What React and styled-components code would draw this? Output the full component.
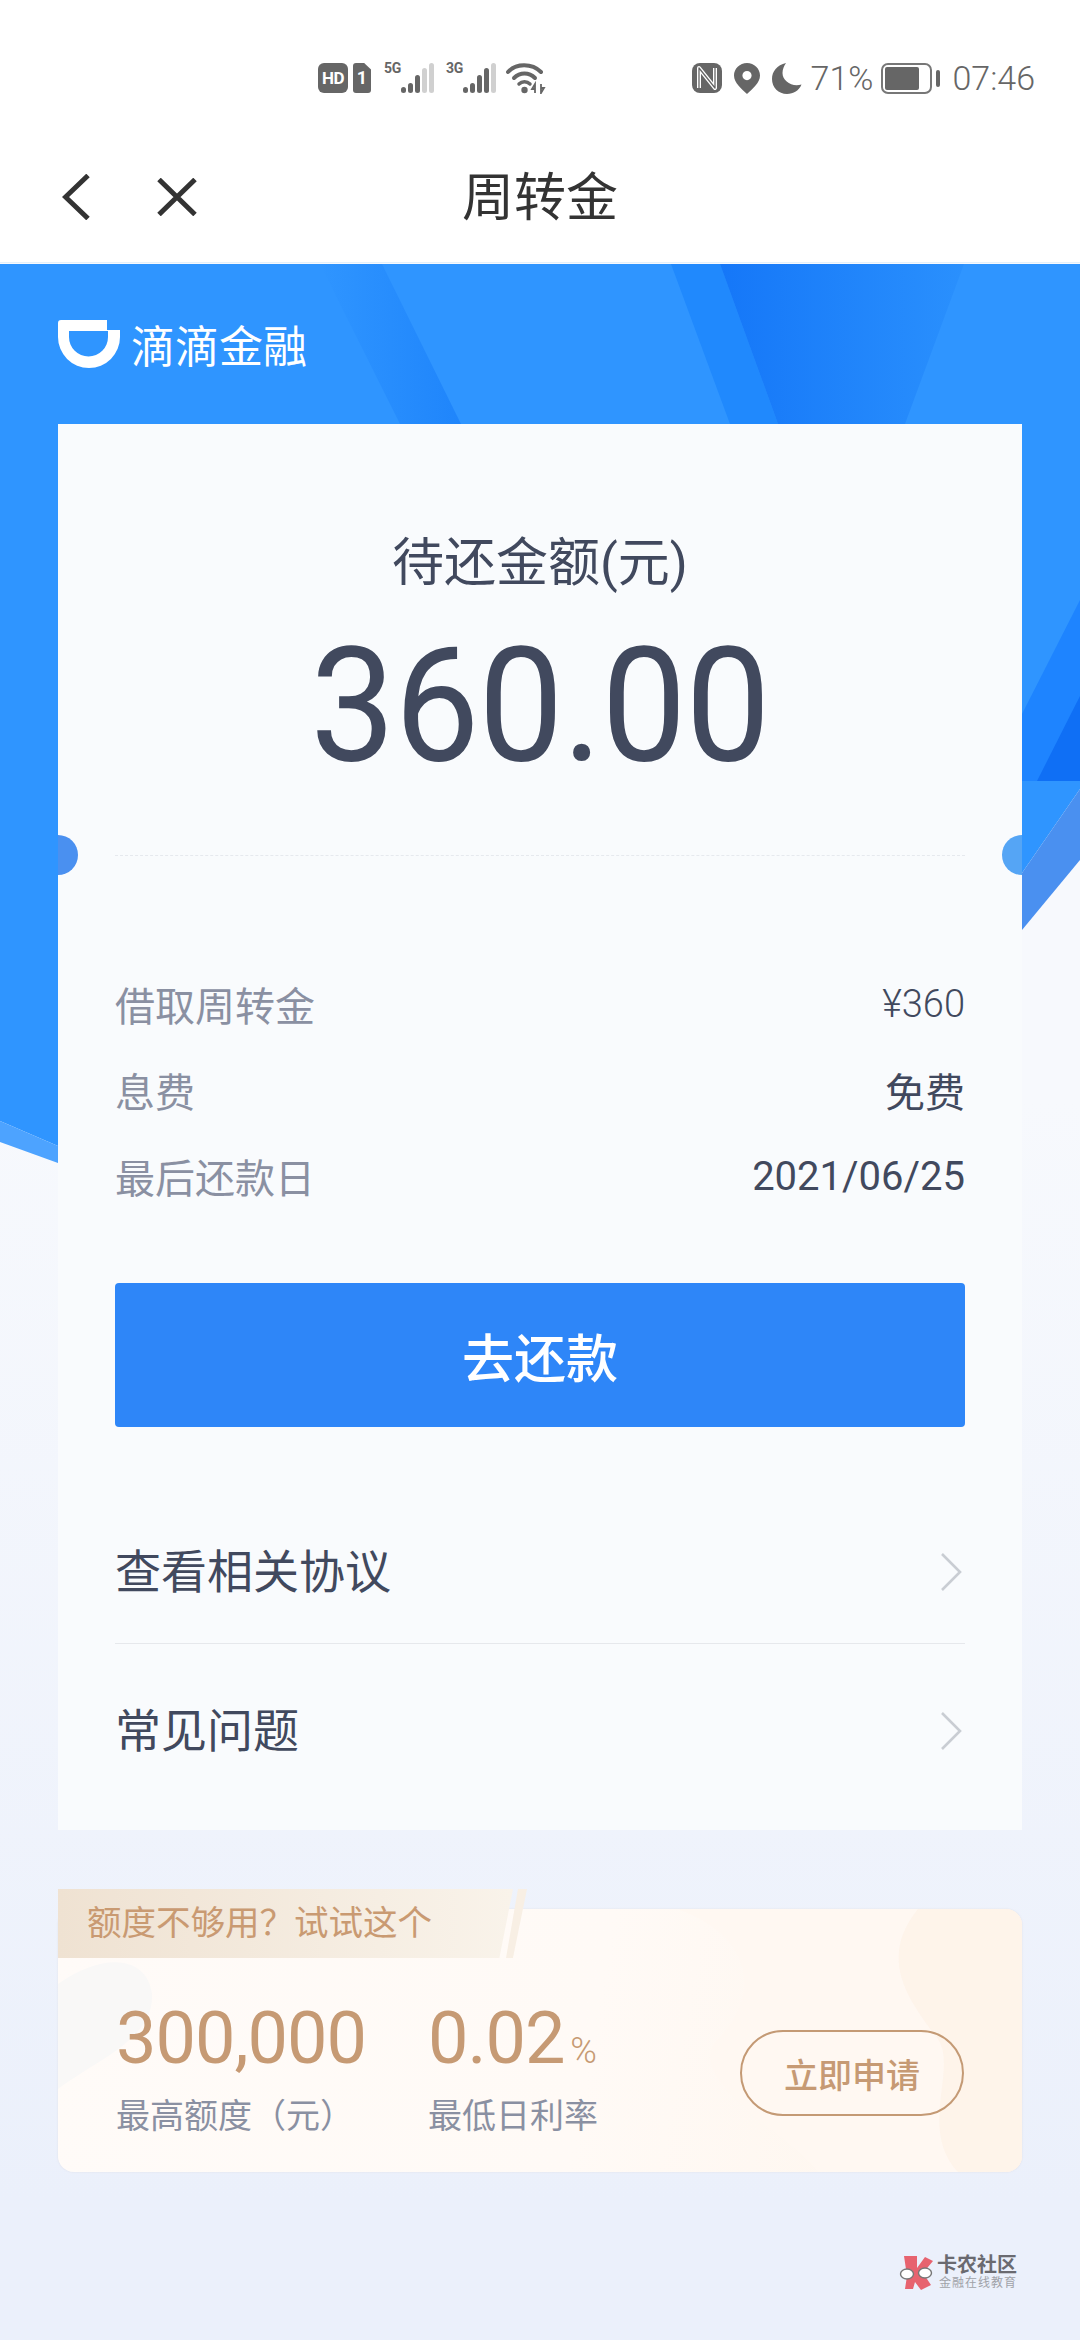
import React from 'react'
import styled, { createGlobalStyle } from 'styled-components'

const GlobalStyle = createGlobalStyle`
  html, body {
    margin: 0;
    padding: 0;
  }
  body {
    font-family: Roboto, "Noto Sans CJK SC", sans-serif;
    background: #ebf0fb;
  }
  * {
    box-sizing: border-box;
  }
`

const Page = styled.div`
  width: 1080px;
  height: 2340px;
  overflow: hidden;
  display: flex;
  flex-direction: column;
  background: linear-gradient(to bottom, #f7f9fd 1100px, #ebf0fb 2200px);
`

/* status bar */
const StatusBar = styled.div`
  height: 100px;
  padding: 63px 45px 0 318px;
  display: flex;
  justify-content: space-between;
  align-items: flex-start;
  background: #fff;
  color: #666;
`
const StatusGroup = styled.div`
  display: flex;
  align-items: flex-start;
`
const HdBadge = styled.div`
  width: 30px;
  height: 30px;
  border-radius: 6px;
  background: #666;
  color: #fff;
  font-size: 17px;
  font-weight: 700;
  line-height: 30px;
  text-align: center;
  letter-spacing: -0.5px;
`
const SimBadge = styled.div`
  width: 18px;
  height: 30px;
  margin-left: 5px;
  border-radius: 3px;
  background: #666;
  color: #fff;
  font-size: 18px;
  font-weight: 700;
  line-height: 30px;
  text-align: center;
  clip-path: polygon(0 0, 62% 0, 100% 22%, 100% 100%, 0 100%);
`
const SignalBlock = styled.div`
  display: flex;
  margin-left: ${(p) => p.$gap}px;
`
const NetLabel = styled.div`
  width: 17px;
  font-size: 14px;
  font-weight: 700;
  line-height: 11px;
  letter-spacing: -0.3px;
`
const WifiSlot = styled.div`
  margin-left: 10px;
  height: 30px;
`
const IconSlot = styled.div`
  height: 30px;
  margin-left: ${(p) => p.$gap || 0}px;
`
const StatusText = styled.div`
  margin-left: ${(p) => p.$gap || 0}px;
  font-size: 34px;
  font-weight: 300;
  line-height: 30px;
  color: #666;
`
const BatteryBody = styled.div`
  width: 51px;
  height: 31px;
  margin-left: 8px;
  padding: 2px;
  border: 2px solid #777;
  border-radius: 7px;
`
const BatteryFill = styled.div`
  width: 34px;
  height: 100%;
  background: #666;
  border-radius: 2px;
`
const BatteryCap = styled.div`
  width: 4px;
  height: 17px;
  margin: 7px 0 0 4px;
  background: #666;
  border-radius: 2px;
`

/* nav */
const NavBar = styled.div`
  height: 163px;
  padding-top: 32px;
  display: grid;
  grid-template-columns: 1fr auto 1fr;
  align-items: center;
  background: #fff;
  border-bottom: 1px solid #e3f0fb;
`
const NavIcons = styled.div`
  display: flex;
  align-items: center;
  gap: 67px;
  padding-left: 62px;
`
const NavTitle = styled.div`
  margin-top: 4px;
  font-size: 52px;
  line-height: 70px;
  color: #333;
`

/* hero + main */
const Main = styled.div`
  position: relative;
  flex: 1;
  display: flex;
  flex-direction: column;
  padding: 0 58px;
`
const HeroArt = styled.svg`
  position: absolute;
  left: 0;
  top: 0;
`
const Brand = styled.div`
  position: relative;
  height: 161px;
  display: flex;
  align-items: center;
  gap: 11px;
  color: #fff;
  font-size: 44px;
`
const Card = styled.div`
  position: relative;
  background: #f9fbfd;
  padding: 104px 57px 28px;
`
const Notch = styled.div`
  position: absolute;
  top: 411px;
  width: 20px;
  height: 40px;
  background: ${(p) => p.$color};
  ${(p) => (p.$side === 'left' ? 'left: 0;' : 'right: 0;')}
  border-radius: ${(p) => (p.$side === 'left' ? '0 20px 20px 0' : '20px 0 0 20px')};
`
const Summary = styled.div`
  display: flex;
  flex-direction: column;
  align-items: center;
  padding-bottom: 69px;
  border-bottom: 1px dashed #e6e9ee;
`
const SummaryTitle = styled.div`
  font-size: 52px;
  line-height: 72px;
  color: #41495e;
`
const Amount = styled.div`
  margin-top: 26px;
  font-size: 160px;
  line-height: 160px;
  color: #41495e;
  letter-spacing: -1px;
  transform: scaleX(0.945);
`
const DetailList = styled.div`
  margin-top: 105px;
  display: flex;
  flex-direction: column;
`
const DetailRow = styled.div`
  height: 86px;
  display: flex;
  justify-content: space-between;
  align-items: center;
`
const DetailLabel = styled.div`
  font-size: 40px;
  color: #8a90a2;
`
const DetailValue = styled.div`
  font-size: ${(p) => p.$size || 40}px;
  font-weight: ${(p) => p.$weight || 400};
  color: #41495e;
`
const PayButton = styled.div`
  height: 144px;
  margin-top: 64px;
  display: flex;
  align-items: center;
  justify-content: center;
  background: #2e86f8;
  border-radius: 4px;
  color: #fff;
  font-size: 52px;
  font-weight: 500;
`
const LinkList = styled.div`
  margin-top: 58px;
`
const LinkRow = styled.div`
  padding: 57px 3px 41px 0;
  display: flex;
  justify-content: space-between;
  align-items: center;
  border-bottom: ${(p) => (p.$last ? 'none' : '1px solid #e6e8ec')};
`
const LinkText = styled.div`
  font-size: 46px;
  line-height: 60px;
  color: #41495e;
`

/* promo */
const Promo = styled.div`
  position: relative;
  margin-top: 79px;
  height: 263px;
  border-radius: 16px;
  background: linear-gradient(100deg, #fffbf8 0%, #fffaf6 55%, #fef5ec 100%);
  box-shadow: 0 0 2px rgba(200, 190, 190, 0.35);
  padding: 90px 58px 0;
  display: flex;
  align-items: flex-start;
`
const PromoArt = styled.svg`
  position: absolute;
  left: 0;
  top: 0;
  border-radius: 16px;
`
const PromoTab = styled.div`
  position: absolute;
  left: 0;
  top: -20px;
  width: 455px;
  height: 69px;
  padding-left: 29px;
  font-size: 34.5px;
  line-height: 69px;
  color: #c99a72;
  background: linear-gradient(90deg, #efe2d2, #f9f3ea);
  clip-path: polygon(0 0, 100% 0, 97% 100%, 0 100%);
`
const TabStripe = styled.div`
  position: absolute;
  left: 448px;
  top: -20px;
  width: 21px;
  height: 69px;
  background: #f8efe4;
  clip-path: polygon(57% 0, 100% 0, 33% 100%, 0 100%);
`
const Stat = styled.div`
  position: relative;
  display: flex;
  flex-direction: column;
  margin-right: ${(p) => p.$gap || 0}px;
`
const StatValue = styled.div`
  font-size: 72px;
  line-height: 80px;
  letter-spacing: -1px;
  color: #c69a74;
  white-space: nowrap;
`
const StatUnit = styled.span`
  margin-left: 6px;
  font-size: 36px;
  font-weight: 300;
  line-height: 1;
  letter-spacing: 0;
`
const StatLabel = styled.div`
  margin-top: 13px;
  font-size: 34px;
  line-height: 48px;
  color: #8a90a2;
  white-space: nowrap;
`
const ApplyButton = styled.div`
  position: relative;
  margin-left: auto;
  margin-top: 31px;
  width: 224px;
  height: 86px;
  border: 2px solid #c49a75;
  border-radius: 43px;
  display: flex;
  align-items: center;
  justify-content: center;
  font-size: 34px;
  font-weight: 500;
  color: #c69a74;
`

/* watermark */
const Watermark = styled.div`
  margin: 82px 5px 0 0;
  display: flex;
  justify-content: flex-end;
  align-items: center;
  gap: 3px;
`
const WatermarkText = styled.div`
  display: flex;
  flex-direction: column;
`
const WatermarkName = styled.div`
  font-size: 20px;
  font-weight: 700;
  line-height: 22px;
  color: #6a6a70;
`
const WatermarkSub = styled.div`
  font-size: 12px;
  line-height: 15px;
  letter-spacing: 1px;
  color: #a0a2a8;
  margin-left: 2px;
`

const SignalBars = ({ lit }) => (
  <svg width="33" height="30" viewBox="0 0 33 30">
    {[
      [0, 24, 6],
      [7, 20, 10],
      [14, 12, 18],
      [21, 5, 25],
      [28, 0, 30],
    ].map(([x, y, h], i) => (
      <rect key={x} x={x} y={y} width="5" height={h} rx="2.5" fill={i < lit ? '#666' : '#d0d0d0'} />
    ))}
  </svg>
)

const WifiIcon = () => (
  <svg width="40" height="31" viewBox="0 0 40 31" fill="none" stroke="#666" strokeLinecap="round">
    <path d="M2 9 C10 0 26 0 35 9" strokeWidth="4" />
    <path d="M8 15 C14 9 23 9 29 15" strokeWidth="4" />
    <path d="M13 21 C16 18 21 18 24 21" strokeWidth="3.5" />
    <circle cx="18.5" cy="27" r="3.2" fill="#666" stroke="none" />
    <path d="M29 30 V21 L26 26 H29 M35 21 V30 L38 25 H35" strokeWidth="1.8" strokeLinecap="butt" />
  </svg>
)

const NfcIcon = () => (
  <svg width="30" height="30" viewBox="0 0 30 30">
    <rect width="30" height="30" rx="8" fill="#666" />
    <path d="M7 25 V5 L23 25 V5" fill="none" stroke="#fff" strokeWidth="4" strokeLinejoin="round" />
    <path d="M7 25 V5 L23 25 V5" fill="none" stroke="#666" strokeWidth="1.3" strokeLinejoin="round" />
  </svg>
)

const PinIcon = () => (
  <svg width="26" height="31" viewBox="0 0 26 31">
    <path
      fillRule="evenodd"
      fill="#666"
      d="M13 0 C5.8 0 0 5.6 0 12.6 C0 20 7.5 26 13 31 C18.5 26 26 20 26 12.6 C26 5.6 20.2 0 13 0 Z M13 8 A4.6 4.6 0 1 1 13 17.2 A4.6 4.6 0 1 1 13 8 Z"
    />
  </svg>
)

const MoonIcon = () => (
  <svg width="30" height="31" viewBox="0 0 30 31">
    <path fill="#666" d="M14 0 C5 2 0 8.5 0 16 C0 24.5 6.5 31 15 31 C21.5 31 27 27.5 29.5 21.5 C20 24.5 10.5 18 10.5 10 C10.5 6 12 3 14 0 Z" />
  </svg>
)

const BackIcon = () => (
  <svg width="28" height="46" viewBox="0 0 28 46" fill="none" stroke="#333" strokeWidth="5">
    <path d="M26 1.5 L3.5 23 L26 44.5" />
  </svg>
)

const CloseIcon = () => (
  <svg width="40" height="38" viewBox="0 0 40 38" fill="none" stroke="#333" strokeWidth="5">
    <path d="M2 1.5 L38 36.5 M38 1.5 L2 36.5" />
  </svg>
)

const ChevronIcon = () => (
  <svg width="22" height="38" viewBox="0 0 22 38" fill="none" stroke="#c9cdd3" strokeWidth="2.6">
    <path d="M2 1 L20 19 L2 37" />
  </svg>
)

const DidiLogo = () => (
  <svg width="62" height="48" viewBox="0 0 62 48">
    <path
      fill="#fff"
      fillRule="evenodd"
      d="M3 0 H49 V10 H62 V17 A31 31 0 0 1 0 17 V3 A3 3 0 0 1 3 0 Z M11 11 H50 V17 A19.5 19.5 0 0 1 11 17 Z"
    />
  </svg>
)

const WatermarkLogo = () => (
  <svg width="35" height="34" viewBox="0 0 35 34">
    <path d="M5 0 H18 V12 L26 1 L34 5 L24 17 L32 29 L22 34 L16 26 L14 33 L6 33 L8 20 Z" fill="#e7636f" />
    <g fill="#fff" stroke="#777" strokeWidth="1.4">
      <ellipse cx="8" cy="18" rx="6.5" ry="5" />
      <ellipse cx="26" cy="17" rx="6.5" ry="5" />
    </g>
  </svg>
)

const HeroBackdrop = () => (
  <HeroArt width="1080" height="920" viewBox="0 263 1080 920">
    <defs>
      <linearGradient id="stripeA" x1="0" y1="0" x2="1" y2="0">
        <stop offset="0" stopColor="#2f95ff" />
        <stop offset="1" stopColor="#1f85fb" />
      </linearGradient>
      <linearGradient id="stripeB" x1="0" y1="0" x2="1" y2="0">
        <stop offset="0" stopColor="#1577f8" />
        <stop offset="1" stopColor="#2a90fd" />
      </linearGradient>
    </defs>
    <polygon points="0,264 1080,264 1080,789 1022,873 58,1146 0,1121" fill="#2f95ff" />
    <polygon points="320,264 382,264 461,424 400,424" fill="url(#stripeA)" />
    <polygon points="671,264 720,264 778,424 730,424" fill="#2089fd" />
    <polygon points="720,264 964,264 905,424 778,424" fill="url(#stripeB)" />
    <polygon points="1022,714 1080,600 1080,781 1022,781" fill="#1e84ff" />
    <polygon points="1037,781 1080,696 1080,781" fill="#0f6ff5" />
    <polygon points="1080,789 1022,873 1022,930 1080,860" fill="#4a90f0" />
    <polygon points="0,1121 58,1146 58,1163 0,1142" fill="#4da3ff" />
  </HeroArt>
)

const PromoBackdrop = () => (
  <PromoArt width="964" height="263" viewBox="0 0 964 263">
    <path d="M0 75 C50 40 90 50 94 85 C96 130 40 150 0 180 Z" fill="#f9f8f7" />
    <path d="M620 0 C700 30 700 90 660 130 C620 170 740 230 760 263 H964 V0 Z" fill="#fff8f2" />
    <path d="M860 0 C820 50 850 90 880 130 C900 160 860 220 900 263 H964 V0 Z" fill="#feefe2" opacity="0.5" />
  </PromoArt>
)

const App = () => {
  return (
    <Page>
      <GlobalStyle />
      <StatusBar>
        <StatusGroup>
          <HdBadge>HD</HdBadge>
          <SimBadge>1</SimBadge>
          <SignalBlock $gap={13}>
            <NetLabel>5G</NetLabel>
            <SignalBars lit={3} />
          </SignalBlock>
          <SignalBlock $gap={12}>
            <NetLabel>3G</NetLabel>
            <SignalBars lit={4} />
          </SignalBlock>
          <WifiSlot>
            <WifiIcon />
          </WifiSlot>
        </StatusGroup>
        <StatusGroup>
          <IconSlot>
            <NfcIcon />
          </IconSlot>
          <IconSlot $gap={12}>
            <PinIcon />
          </IconSlot>
          <IconSlot $gap={12}>
            <MoonIcon />
          </IconSlot>
          <StatusText $gap={9}>71%</StatusText>
          <BatteryBody>
            <BatteryFill />
          </BatteryBody>
          <BatteryCap />
          <StatusText $gap={12}>07:46</StatusText>
        </StatusGroup>
      </StatusBar>

      <NavBar>
        <NavIcons>
          <BackIcon />
          <CloseIcon />
        </NavIcons>
        <NavTitle>周转金</NavTitle>
      </NavBar>

      <Main>
        <HeroBackdrop />
        <Brand>
          <DidiLogo />
          滴滴金融
        </Brand>

        <Card>
          <Notch $side="left" $color="#4a90f0" />
          <Notch $side="right" $color="#55a5f5" />
          <Summary>
            <SummaryTitle>待还金额(元)</SummaryTitle>
            <Amount>360.00</Amount>
          </Summary>

          <DetailList>
            <DetailRow>
              <DetailLabel>借取周转金</DetailLabel>
              <DetailValue $size={38} $weight={300}>¥360</DetailValue>
            </DetailRow>
            <DetailRow>
              <DetailLabel>息费</DetailLabel>
              <DetailValue>免费</DetailValue>
            </DetailRow>
            <DetailRow>
              <DetailLabel>最后还款日</DetailLabel>
              <DetailValue>2021/06/25</DetailValue>
            </DetailRow>
          </DetailList>

          <PayButton>去还款</PayButton>

          <LinkList>
            <LinkRow>
              <LinkText>查看相关协议</LinkText>
              <ChevronIcon />
            </LinkRow>
            <LinkRow $last>
              <LinkText>常见问题</LinkText>
              <ChevronIcon />
            </LinkRow>
          </LinkList>
        </Card>

        <Promo>
          <PromoBackdrop />
          <PromoTab>额度不够用？试试这个</PromoTab>
          <TabStripe />
          <Stat $gap={62}>
            <StatValue>300,000</StatValue>
            <StatLabel>最高额度（元）</StatLabel>
          </Stat>
          <Stat>
            <StatValue>
              0.02
              <StatUnit>%</StatUnit>
            </StatValue>
            <StatLabel>最低日利率</StatLabel>
          </Stat>
          <ApplyButton>立即申请</ApplyButton>
        </Promo>

        <Watermark>
          <WatermarkLogo />
          <WatermarkText>
            <WatermarkName>卡农社区</WatermarkName>
            <WatermarkSub>金融在线教育</WatermarkSub>
          </WatermarkText>
        </Watermark>
      </Main>
    </Page>
  )
}

export default App
